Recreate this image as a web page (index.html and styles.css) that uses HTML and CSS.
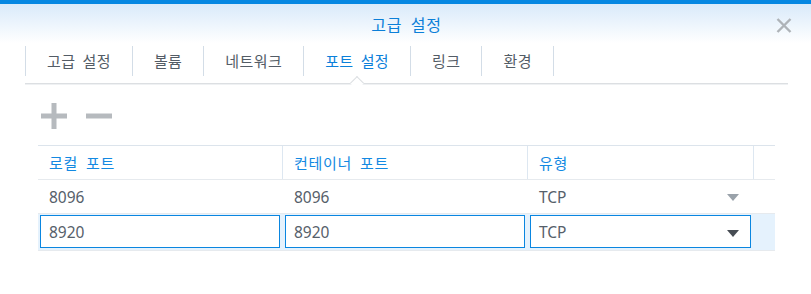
FILE: index.html
```html
<!DOCTYPE html>
<html lang="ko">
<head>
<meta charset="utf-8">
<title>고급 설정</title>
<link rel="stylesheet" href="styles.css">
</head>
<body>
<div class="dialog">
  <div class="topbar"></div>
  <div class="header">
    <div class="title">고급 설정</div>
    <svg class="close" width="16" height="15" viewBox="0 0 16 15"><path d="M1.5 1 L14.5 14 M14.5 1 L1.5 14" stroke="#aeb3b8" stroke-width="2.4" fill="none"/></svg>
  </div>
  <div class="tabbar">
    <div class="tabs">
      <div class="tab">고급 설정</div>
      <div class="tab">볼륨</div>
      <div class="tab">네트워크</div>
      <div class="tab active">포트 설정</div>
      <div class="tab">링크</div>
      <div class="tab">환경</div>
    </div>
    <div class="tabline"><span class="notch"></span></div>
  </div>
  <div class="toolbar">
    <svg class="tool" width="26" height="26" viewBox="0 0 26 26"><path d="M13 0 V26 M0 13 H26" stroke="#b6babe" stroke-width="5"/></svg>
    <svg class="tool" width="26" height="26" viewBox="0 0 26 26"><path d="M0 13 H26" stroke="#b6babe" stroke-width="5"/></svg>
  </div>
  <div class="grid">
    <div class="row head">
      <div class="cell">로컬 포트</div>
      <div class="cell">컨테이너 포트</div>
      <div class="cell">유형</div>
      <div class="cell last"></div>
    </div>
    <div class="row">
      <div class="cell">8096</div>
      <div class="cell">8096</div>
      <div class="cell sel">TCP<span class="arrow light"></span></div>
      <div class="cell last"></div>
    </div>
    <div class="row editing">
      <div class="cell"><div class="input">8920</div></div>
      <div class="cell"><div class="input">8920</div></div>
      <div class="cell"><div class="input sel">TCP<span class="arrow dark"></span></div></div>
      <div class="cell last"></div>
    </div>
  </div>
</div>
</body>
</html>
```
FILE: styles.css
```css
html, body {
  margin: 0;
  padding: 0;
  background: #fff;
}
body {
  font-family: "Noto Sans", "Noto Sans CJK KR", sans-serif;
  color: #56606a;
  width: 811px;
  height: 294px;
  overflow: hidden;
}
.topbar {
  height: 4px;
  background: #0587e2;
}
.header {
  position: relative;
  height: 39px;
  background: linear-gradient(#d9eafa, #ffffff);
  display: flex;
  align-items: center;
  justify-content: center;
}
.title {
  font-family: "Noto Sans CJK KR", sans-serif;
  font-size: 16px;
  color: #0b7fd8;
  line-height: 20px;
  margin-top: 1px;
  margin-left: 2px;
  letter-spacing: 0.8px;
  word-spacing: 3px;
}
.close {
  position: absolute;
  left: 776px;
  top: 14px;
}
.tabbar {
  margin: 3px 23px 0 25px;
}
.tabs {
  display: flex;
  height: 30px;
  border-left: 1px solid #d3dde7;
}
.tab {
  font-family: "Noto Sans CJK KR", sans-serif;
  font-size: 15px;
  line-height: 30px;
  color: #535c66;
  padding: 0 21px;
  border-right: 1px solid #d3dde7;
  white-space: nowrap;
  letter-spacing: 0.4px;
  word-spacing: 2.5px;
}
.tab.active {
  color: #0b80da;
}
.tabline {
  position: relative;
  margin-top: 7px;
  height: 0;
  border-top: 1px solid #dcdfe2;
  border-bottom: 1px solid #eff1f3;
}
.notch {
  position: absolute;
  left: 327px;
  top: -6px;
  width: 9px;
  height: 9px;
  background: #fff;
  border-left: 1px solid #dcdfe2;
  border-top: 1px solid #dcdfe2;
  transform: rotate(45deg);
}
.toolbar {
  display: flex;
  gap: 19px;
  margin: 18px 0 0 41px;
  height: 26px;
}
.grid {
  margin: 16px 0 0 38px;
  width: 737px;
  border-top: 1px solid #dce4ec;
}
.row {
  display: grid;
  grid-template-columns: 245px 245px 226px 21px;
  height: 33px;
  border-bottom: 1px solid #e6eaee;
}
.row.head .cell {
  color: #1389e2;
  font-family: "Noto Sans CJK KR", sans-serif;
  font-size: 15px;
  letter-spacing: 0.7px;
  word-spacing: 3px;
  border-right: 1px solid #dde7f1;
}
.row.head .cell.last {
  border-right: none;
}
.cell {
  display: flex;
  align-items: center;
  padding-left: 11px;
  font-size: 15.5px;
  position: relative;
  min-width: 0;
}
.cell.last {
  padding: 0;
}
.row.editing {
  height: 36px;
  background: #e5f2fd;
}
.row.editing .cell {
  padding: 1px 3px 2px 2px;
  align-items: stretch;
}
.row.editing .cell.last {
  padding: 0;
}
.input {
  flex: 1;
  background: #fff;
  border: 1px solid #0a86e0;
  display: flex;
  align-items: center;
  padding-left: 8px;
  position: relative;
}
.arrow {
  position: absolute;
  width: 0;
  height: 0;
  border-left: 6.5px solid transparent;
  border-right: 6.5px solid transparent;
  border-top: 7px solid #9aa2aa;
}
.cell.sel .arrow.light {
  left: 199px;
  top: 14px;
}
.input.sel .arrow.dark {
  border-top-color: #464c53;
  left: 196px;
  top: 14px;
}
```
